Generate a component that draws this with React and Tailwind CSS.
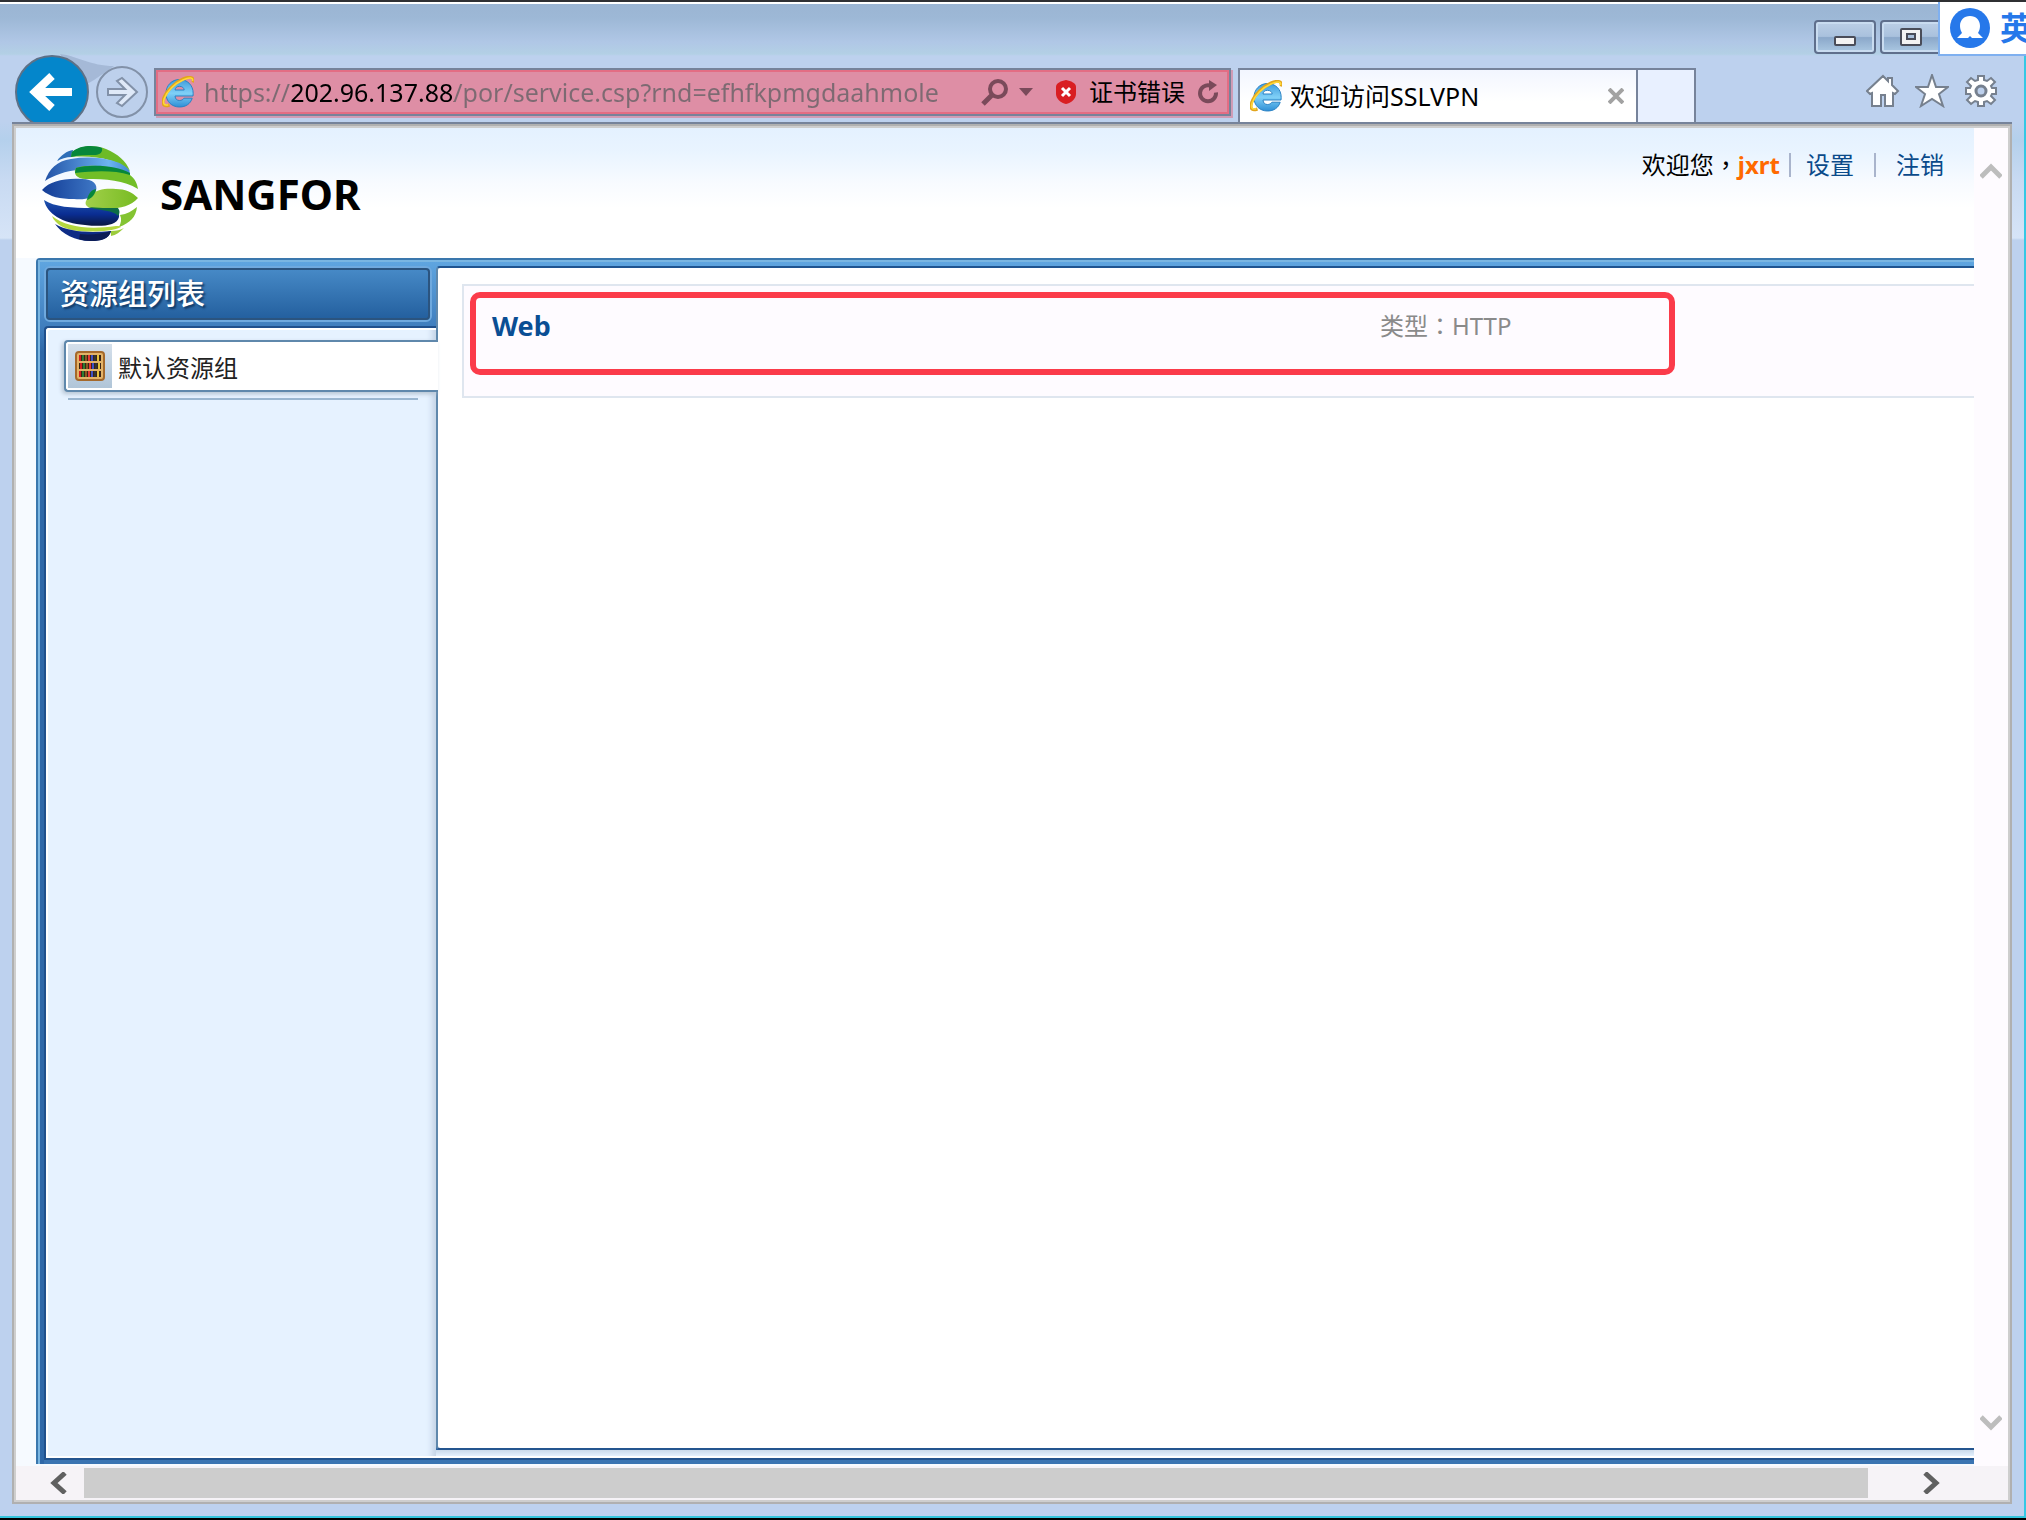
import { useState } from 'react';

function IeIcon({ id }) {
    return (
        <svg className="w-8 h-8 shrink-0" viewBox="0 0 32 32" aria-hidden="true">
            <defs>
                <linearGradient id={id} x1="0" y1="0" x2="0" y2="1">
                    <stop offset="0" stopColor="#3f9bdc" />
                    <stop offset="0.5" stopColor="#7fd0f7" />
                    <stop offset="1" stopColor="#2f8fd6" />
                </linearGradient>
            </defs>
            <path
                d="M31 20H13c.2 3 2 4.500 4.500 4.500 2 0 3.500-.8 4.400-2.300h8.300C28.500 27.800 23.800 31 17.500 31 9.800 31 4 25.600 4 17.500S9.800 3.500 17.500 3.500 31.200 9 31.200 17.500z M13 14h9.200c-.3-2.200-2-3.700-4.700-3.700s-4.200 1.500-4.500 3.700z"
                fill={`url(#${id})`}
                stroke="#2b82c4"
                strokeWidth="1"
                fillRule="evenodd"
            />
            <path
                d="M31 6.500C32.500 1 28 0 21 3 13 6.500 4.500 14.500 1.800 22c-2 6-.6 9.500 5.700 7"
                fill="none"
                stroke="#e2a51c"
                strokeWidth="3"
            />
            <path
                d="M30.500 5C31.500 1.500 27.500 1 21 4 13 7.500 5 15 2.300 22.500c-1.600 4.700-.6 7.300 4 6.200"
                fill="none"
                stroke="#ffd83a"
                strokeWidth="1.600"
            />
        </svg>
    );
}

function SangforLogo() {
    return (
        <svg className="w-24 h-24 shrink-0" viewBox="0 0 96 96" aria-hidden="true">
            <defs>
                <linearGradient id="blueTop" x1="0" y1="0" x2="1" y2="0">
                    <stop offset="0" stopColor="#2252a6" />
                    <stop offset="0.75" stopColor="#6db5f2" />
                    <stop offset="1" stopColor="#3f86cf" />
                </linearGradient>
                <linearGradient id="blueMid" x1="0" y1="0" x2="1" y2="0">
                    <stop offset="0" stopColor="#123c96" />
                    <stop offset="1" stopColor="#3f78c6" />
                </linearGradient>
                <linearGradient id="blueLow" x1="0" y1="0" x2="0" y2="1">
                    <stop offset="0" stopColor="#1f55b0" />
                    <stop offset="0.55" stopColor="#0a2d92" />
                    <stop offset="1" stopColor="#0a1740" />
                </linearGradient>
                <linearGradient id="greenMid" x1="0" y1="0" x2="1" y2="0">
                    <stop offset="0" stopColor="#a2d04a" />
                    <stop offset="1" stopColor="#77bb22" />
                </linearGradient>
            </defs>
            <path d="M15 15C19 9 25 5 31 4l-1 7c-6 0-11 2-15 4z" fill="#2f6fb8" />
            <path d="M30 6C40-1 54-1 64 3c12 5 20 12 24 22C76 14 54 9 29 11z" fill="#6dbb26" />
            <path d="M30 6C38-1 52-1 60 2c1 5-3 7-8 7-7 0-15 0-23 2z" fill="#07873a" />
            <path d="M3 35C7 23 15 15 29 13c24-4 50 1 58 11 1 2 1 4 1 6-10-7-30-9-52-6C24 25 12 29 3 35z" fill="url(#blueTop)" />
            <path d="M34 22c10-4 42-3 54 7 5 4 7 8 8 14-14-9-32-10-52-10-10 0-13-6-10-11z" fill="#72be27" />
            <path d="M34 22c14-4 40-3 54 5v2C72 24 52 25 33 27z" fill="#07873a" />
            <path d="M0 44c8-9 22-12 40-11 11 0 16 5 14 12-2 7-10 9-22 8-14 0-24-2-32-9z" fill="url(#blueMid)" />
            <path d="M48 50c6-7 17-8 26-7 9 0 16 3 22 9-7 8-17 10-30 11H54c-12-1-13-7-6-13z" fill="url(#greenMid)" />
            <path d="M54 43c-1 6-4 9-9 11 1-6 4-10 9-11z" fill="#07873a" />
            <path d="M2 54c10 7 28 8 48 8 12 0 29 0 27 9-2 9-18 10-34 8C20 77 5 68 2 54z" fill="url(#blueLow)" />
            <path d="M46 61c8 1 22 1 30 1 2 3 2 5 0 8-4-6-18-5-30-9z" fill="#0d6c46" />
            <path d="M95 61c-1 10-7 16-18 20 2-4 3-8 1-12 7-1 12-4 17-8z" fill="#84c432" />
            <path d="M10 70c14 11 36 14 64 10 3 0 5 0 5 1-10 5-30 5-42 4-14-1-24-7-27-15z" fill="#b4d83f" />
            <path d="M13 78c14 8 33 9 56 7-2 8-10 10-20 10-16 0-29-7-36-17z" fill="#0e2c86" />
            <path d="M38 88c10 1 22 0 31-3-2 8-10 10-20 10-5 0-9-1-12-2z" fill="#0c1c56" />
            <path d="M69 85c5 0 10-1 13-3-4 4-8 7-13 8z" fill="#9ccc3c" />
        </svg>
    );
}

function BookshelfIcon() {
    const books = ['#d32020', '#2e7d32', '#8a5a20', '#e53935', '#3f51c5', '#333333', '#e6c23a'];
    return (
        <svg className="w-[30px] h-[30px]" viewBox="0 0 30 30" aria-hidden="true">
            <rect x="1" y="1" width="28" height="28" rx="3" fill="#e3b368" stroke="#a5692a" strokeWidth="2" />
            {[4, 12, 20].map((y) => (
                <g key={y}>
                    <rect x="4" y={y} width="22" height="6" fill="#3a2516" />
                    {books.map((color, i) => (
                        <rect key={color} x={4 + i * 3 + (y === 12 ? 1 : 0)} y={y} width="2" height="6" fill={color} />
                    ))}
                </g>
            ))}
        </svg>
    );
}

function Chevron({ points, className }) {
    return (
        <svg className={className} viewBox="0 0 22 22" fill="none" stroke="currentColor" aria-hidden="true">
            <polyline points={points} strokeWidth="5" />
        </svg>
    );
}

// Full-width punctuation centred in its em box
function Punct({ children }) {
    return (
        <span lang="zh-TW" className="font-['Noto_Sans_CJK_TC',sans-serif] leading-none">
            {children}
        </span>
    );
}

// Window caption buttons
function TitleBar() {
    const captionClass =
        'w-[62px] h-[34px] rounded-[4px] border-2 border-[#5f6f8c] flex items-center justify-center bg-[linear-gradient(#bccfe6_0%,#a9c1dd_48%,#8ba8ca_52%,#abc8e2_100%)] shadow-[inset_0_0_0_2px_#c9dcf0]';
    return (
        <div className="h-16 pt-4 pr-[82px] flex justify-end gap-1 shrink-0">
            <button type="button" aria-label="最小化" className={captionClass}>
                <svg className="w-[22px] h-[22px]" viewBox="0 0 22 22">
                    <rect x="1" y="11" width="20" height="8" rx="1" fill="#f3f3f3" stroke="#4a4d59" strokeWidth="2" />
                </svg>
            </button>
            <button type="button" aria-label="最大化" className={captionClass}>
                <svg className="w-[22px] h-[22px]" viewBox="0 0 22 22">
                    <rect x="1" y="3" width="20" height="16" rx="1" fill="#f3f3f3" stroke="#4a4d59" strokeWidth="2" />
                    <rect x="7" y="8" width="8" height="5" fill="#a9bfda" stroke="#4a4d59" strokeWidth="2" />
                </svg>
            </button>
        </div>
    );
}

function Toolbar() {
    const [url, setUrl] = useState('https://202.96.137.88/por/service.csp?rnd=efhfkpmgdaahmole');

    return (
        <div className="h-[54px] flex items-start shrink-0 pr-[26px]">
            {/* Back / forward */}
            <div className="flex items-start w-[154px] shrink-0 relative">
                <svg className="absolute left-[60px] -top-[14px] w-16 h-10" viewBox="0 0 64 40" aria-hidden="true">
                    <path d="M0 0C18 2 30 12 54 12L34 26 20 34z" fill="#9fb3d1" opacity="0.8" />
                </svg>
                <button type="button" aria-label="后退" className="relative ml-[14px] -mt-[14px] w-[76px] h-[68px] overflow-hidden">
                    <svg className="w-[76px] h-[76px]" viewBox="0 0 76 76">
                        <circle cx="38" cy="38" r="36" fill="#0486cb" stroke="#5d7187" strokeWidth="2" />
                        <path d="M58 38H22M38 22L21 38l17 16" fill="none" stroke="#fff" strokeWidth="8" />
                    </svg>
                </button>
                <button type="button" aria-label="前进" className="relative ml-[5px] -mt-[2px] w-[54px] h-[54px]">
                    <svg className="w-[54px] h-[54px]" viewBox="0 0 54 54">
                        <circle cx="27" cy="26" r="25" fill="#bdd0ec" stroke="#8291a8" strokeWidth="2" />
                        <path
                            d="M13 23h17l-8-8 5-3 15 14-15 14-5-3 8-8H13z"
                            fill="#dfe9f8"
                            stroke="#8291a8"
                            strokeWidth="2"
                        />
                    </svg>
                </button>
            </div>

            {/* Address bar */}
            <form
                onSubmit={(e) => e.preventDefault()}
                className="flex-1 min-w-0 h-12 mr-[7px] flex items-center border-2 border-[#76839b] bg-[#de8ea5] pl-[6px] pr-2 shadow-[inset_0_0_0_2px_#e36d84,2px_2px_0_#cf9cb6]"
            >
                <IeIcon id="ieAddress" />
                <input
                    type="text"
                    aria-label="地址"
                    value={url}
                    onChange={(e) => setUrl(e.target.value)}
                    spellCheck={false}
                    className="flex-1 min-w-0 ml-[10px] outline-none text-[25px] leading-9 text-transparent caret-black bg-clip-text bg-[linear-gradient(90deg,#7d6a72_86px,#000_86px,#000_250px,#7d6a72_250px)]"
                />
                <button type="button" aria-label="搜索" className="flex items-center gap-[10px] mr-[22px]">
                    <svg className="w-7 h-7" viewBox="0 0 28 28" fill="none" stroke="#7a4a5a">
                        <circle cx="17" cy="11" r="8" strokeWidth="4" />
                        <path d="M11 17L2 26" strokeWidth="5" />
                    </svg>
                    <svg className="w-[14px] h-[8px]" viewBox="0 0 14 8">
                        <path d="M0 0h14L7 8z" fill="#7a4a5a" />
                    </svg>
                </button>
                <button type="button" className="flex items-center text-2xl text-black whitespace-nowrap">
                    <svg className="w-[22px] h-[24px] mr-3" viewBox="0 0 22 24">
                        <path d="M11 0c5 1 10 3 10 7v7c0 5-5 9-10 10C6 23 1 19 1 14V7c0-4 5-6 10-7z" fill="#d91e22" />
                        <path d="M7 8l8 8M15 8l-8 8" stroke="#fff" strokeWidth="3" />
                    </svg>
                    证书错误
                </button>
                <button type="button" aria-label="刷新" className="ml-3">
                    <svg className="w-6 h-6" viewBox="0 0 24 24" fill="none" stroke="#7a4a5a" strokeWidth="4">
                        <path d="M19 12.500A8 8 0 1 1 13 5.500" />
                        <path d="M12 0l8 5-8 6z" fill="#7a4a5a" stroke="none" />
                    </svg>
                </button>
            </form>

            {/* Tabs */}
            <div className="w-[400px] h-full shrink-0 flex items-center border-2 border-b-0 border-[#76839b] bg-[linear-gradient(#f2f6ff,#ffffff_60%)] pl-[10px] pr-2">
                <IeIcon id="ieTab" />
                <span className="ml-2 flex-1 text-[25px] leading-9 text-black whitespace-nowrap">欢迎访问SSLVPN</span>
                <button type="button" aria-label="关闭标签页" className="mr-1">
                    <svg className="w-4 h-4" viewBox="0 0 16 16" stroke="#a2a2a2" strokeWidth="4">
                        <path d="M1 1l14 14M15 1L1 15" />
                    </svg>
                </button>
            </div>
            <button
                type="button"
                aria-label="新建标签页"
                className="w-[58px] h-full shrink-0 border-2 border-l-0 border-b-0 border-[#76839b] bg-[#e8f0ff]"
            />

            {/* Tools */}
            <div className="ml-[170px] mt-[6px] flex gap-[15px] shrink-0">
                <button type="button" aria-label="主页">
                    <svg className="w-[34px] h-[34px]" viewBox="0 0 34 34" fill="#fff" stroke="#76808e" strokeWidth="2">
                        <path d="M17 2l5 5V4h4v7l6 6-3 3-2-1v13h-8V21h-4v11H6V19l-2 1-3-3z" />
                    </svg>
                </button>
                <button type="button" aria-label="收藏夹">
                    <svg className="w-[34px] h-[34px]" viewBox="0 0 34 34" fill="#fff" stroke="#76808e" strokeWidth="2">
                        <path d="M17 1l4 12h12l-9 7 4 12-11-7-11 7 4-12-9-7h12z" />
                    </svg>
                </button>
                <button type="button" aria-label="工具">
                    <svg className="w-[34px] h-[34px]" viewBox="0 0 34 34" fill="#fff" stroke="#76808e" strokeWidth="2">
                        <path d="M14 2h6v4l3 1 4-3 4 4-4 4 1 2h4v6h-4l-1 2 4 4-4 4-4-3-3 1v4h-6v-4l-3-1-4 3-4-4 4-4-1-2H2v-6h4l1-2-4-4 4-4 4 3 3-1z" />
                        <circle cx="17" cy="17" r="5" fill="#bdd0ec" strokeWidth="3" />
                    </svg>
                </button>
            </div>
        </div>
    );
}

function PageHeader() {
    return (
        <header className="h-[130px] shrink-0 flex items-start justify-between bg-[linear-gradient(#e4f1ff_0px,#e9f4ff_24px,#f8fbff_56px,#ffffff_80px)] pl-[26px] pr-[30px]">
            <div className="flex items-center pt-[18px]">
                <SangforLogo />
                <span className="ml-[22px] text-[42px] leading-none font-bold text-black">SANGFOR</span>
            </div>
            <div className="flex items-center pt-[21px] text-2xl text-[#0a4a8a] whitespace-nowrap">
                <span className="text-black">
                    欢迎您<Punct>，</Punct>
                </span>
                <span className="font-bold text-[#ff6a00]">jxrt</span>
                <span className="ml-[9px] w-[2px] h-6 bg-[#a9b4cc]" />
                <a href="#settings" className="ml-[15px]">设置</a>
                <span className="ml-5 w-[2px] h-6 bg-[#a9b4cc]" />
                <a href="#logout" className="ml-5">注销</a>
            </div>
        </header>
    );
}

function Sidebar() {
    return (
        <aside className="w-[392px] shrink-0 flex flex-col">
            <h2 className="mt-1 mb-1 mr-1 h-14 rounded-[6px] border-2 border-[#6fa9de] shrink-0">
                <span className="h-full flex items-center rounded-[4px] border-2 border-[#2b547f] pl-3 text-[29px] font-medium text-white bg-[linear-gradient(#4689c6,#24609f)] [text-shadow:2px_2px_2px_#123a66]">
                    资源组列表
                </span>
            </h2>
            <nav className="flex-1 rounded-tl-[4px] border-t-2 border-l-2 border-[#20508c] bg-[#e6f2ff] shadow-[inset_2px_2px_0_#ffffff,inset_0_-2px_0_#ffffff,inset_-8px_0_6px_-4px_#c3d3e6] pt-3 pl-[18px]">
                {/* The active group runs into the content panel */}
                <a
                    href="#default-group"
                    className="relative z-10 -mr-[2px] h-[52px] flex items-center rounded-l-[4px] border-2 border-r-0 border-[#5f88ac] bg-white pl-[2px] text-2xl text-[#222222] shadow-[-2px_2px_4px_#b5c3d2]"
                >
                    <span className="w-11 h-11 flex items-center justify-center bg-[linear-gradient(#d5e0eb,#b0c5d8)]">
                        <BookshelfIcon />
                    </span>
                    <span className="ml-[6px] pt-1">默认资源组</span>
                </a>
                <div className="mt-[6px] ml-1 mr-[18px] h-[2px] bg-[#9ab6d0]" />
            </nav>
        </aside>
    );
}

function ResourceList() {
    return (
        <main className="flex-1 min-w-0 flex flex-col pt-1">
            <div className="flex-1 rounded-l-[4px] border-2 border-r-0 border-t-[#1f5490] border-b-[#24558f] border-l-[#5f88ac] bg-white pt-4 pl-6">
                <div className="relative h-[114px] flex items-start border-2 border-r-0 border-[#dfe6ef] bg-[#fefbff] pl-7 pt-[22px]">
                    <a href="#web" className="w-[888px] text-[27px] leading-9 font-bold text-[#0a4e94]">Web</a>
                    <span className="text-2xl leading-9 text-[#8a8a8a]">
                        类型<Punct>：</Punct>HTTP
                    </span>
                    <div className="absolute left-[6px] top-[6px] w-[1205px] h-[83px] rounded-[10px] border-[6px] border-[#fb3b4a] pointer-events-none" />
                </div>
            </div>
            <div className="h-2 shrink-0 bg-[linear-gradient(#c9d9ea,#e4f1ff_6px,#ffffff_6px)]" />
        </main>
    );
}

export default function App() {
    return (
        <div
            lang="zh-CN"
            className="relative min-h-screen flex flex-col overflow-hidden border-t-2 border-t-[#2f3033] border-b-2 border-b-black font-['Noto_Sans','Noto_Sans_CJK_SC',sans-serif]"
        >
            <div className="flex-1 flex flex-col border-t-2 border-t-white border-r-2 border-b-2 border-r-[#35c8e4] border-b-[#35c5dc] bg-[linear-gradient(#9bb5d3_0px,#9db8d6_14px,#b0c7e6_38px,#b3d0e5_50px,#bdd1ee_52px,#bdd1ee_118px,#b4d0ec_136px,#c8daf2_176px,#d6e4f7_234px,#bdd1ee_236px)]">
                <TitleBar />
                <Toolbar />

                <div className="flex-1 flex flex-col mx-3 mb-3 border-t-2 border-[#76839a]">
                    <div className="flex-1 flex flex-col border-2 border-[#b0b0b0]">
                        <div className="flex-1 flex flex-col border-2 border-[#cecece]">
                            <div className="flex-1 flex">
                                {/* Page */}
                                <div className="flex-1 min-w-0 flex flex-col bg-[#f6faff]">
                                    <PageHeader />
                                    <div className="flex-1 flex flex-col ml-5 mb-[2px] rounded-tl-[4px] border-t-2 border-l-2 border-[#3a77ad]">
                                        <div className="flex-1 flex flex-col border-t-2 border-l-2 border-[#7ab6e2] bg-[linear-gradient(#5fa5e0_0px,#3f7dbd_66px,#2f68a8_90px,#2f68a8_100%)]">
                                            <div className="flex-1 flex pl-1">
                                                <Sidebar />
                                                <ResourceList />
                                            </div>
                                            <div className="ml-1 h-[6px] shrink-0 border-t-2 border-[#24558f] bg-[#3a74b2]" />
                                        </div>
                                    </div>
                                </div>

                                {/* Vertical scroll bar */}
                                <div className="w-[34px] shrink-0 flex flex-col justify-between items-center bg-[#fefbff] pt-8 pb-8 text-[#bdbdbd]">
                                    <button type="button" aria-label="向上滚动">
                                        <Chevron className="w-[22px] h-[22px]" points="1,17 11,7 21,17" />
                                    </button>
                                    <button type="button" aria-label="向下滚动">
                                        <Chevron className="w-[22px] h-[22px]" points="1,5 11,15 21,5" />
                                    </button>
                                </div>
                            </div>

                            {/* Horizontal scroll bar */}
                            <div className="h-[34px] shrink-0 flex items-center bg-[#f6f3f7] pl-8 text-[#606060]">
                                <button type="button" aria-label="向左滚动">
                                    <Chevron className="w-[22px] h-[22px]" points="17,1 6,11 17,21" />
                                </button>
                                <div className="flex-1 h-[30px] ml-[14px] mr-[52px] bg-[#cdcdcd]" />
                                <button type="button" aria-label="向右滚动" className="mr-[66px]">
                                    <Chevron className="w-[22px] h-[22px]" points="5,1 16,11 5,21" />
                                </button>
                            </div>
                        </div>
                    </div>
                </div>
            </div>

            {/* Input method badge */}
            <div className="absolute right-0 top-0 w-[88px] h-[54px] flex items-center overflow-hidden border-l-2 border-b-2 border-[#7fb0f0] bg-white pl-[10px]">
                <svg className="w-10 h-10 shrink-0" viewBox="0 0 40 40" aria-hidden="true">
                    <circle cx="20" cy="20" r="20" fill="#2678ea" />
                    <path d="M20 8c6 0 10 4 10 10 0 3-1 5-2 7l5 5H22l-2-2-2 2H7l5-5c-1-2-2-4-2-7 0-6 4-10 10-10z" fill="#fff" />
                </svg>
                <span className="ml-[10px] text-[32px] leading-none font-bold text-[#2678ea]">英</span>
            </div>
        </div>
    );
}
